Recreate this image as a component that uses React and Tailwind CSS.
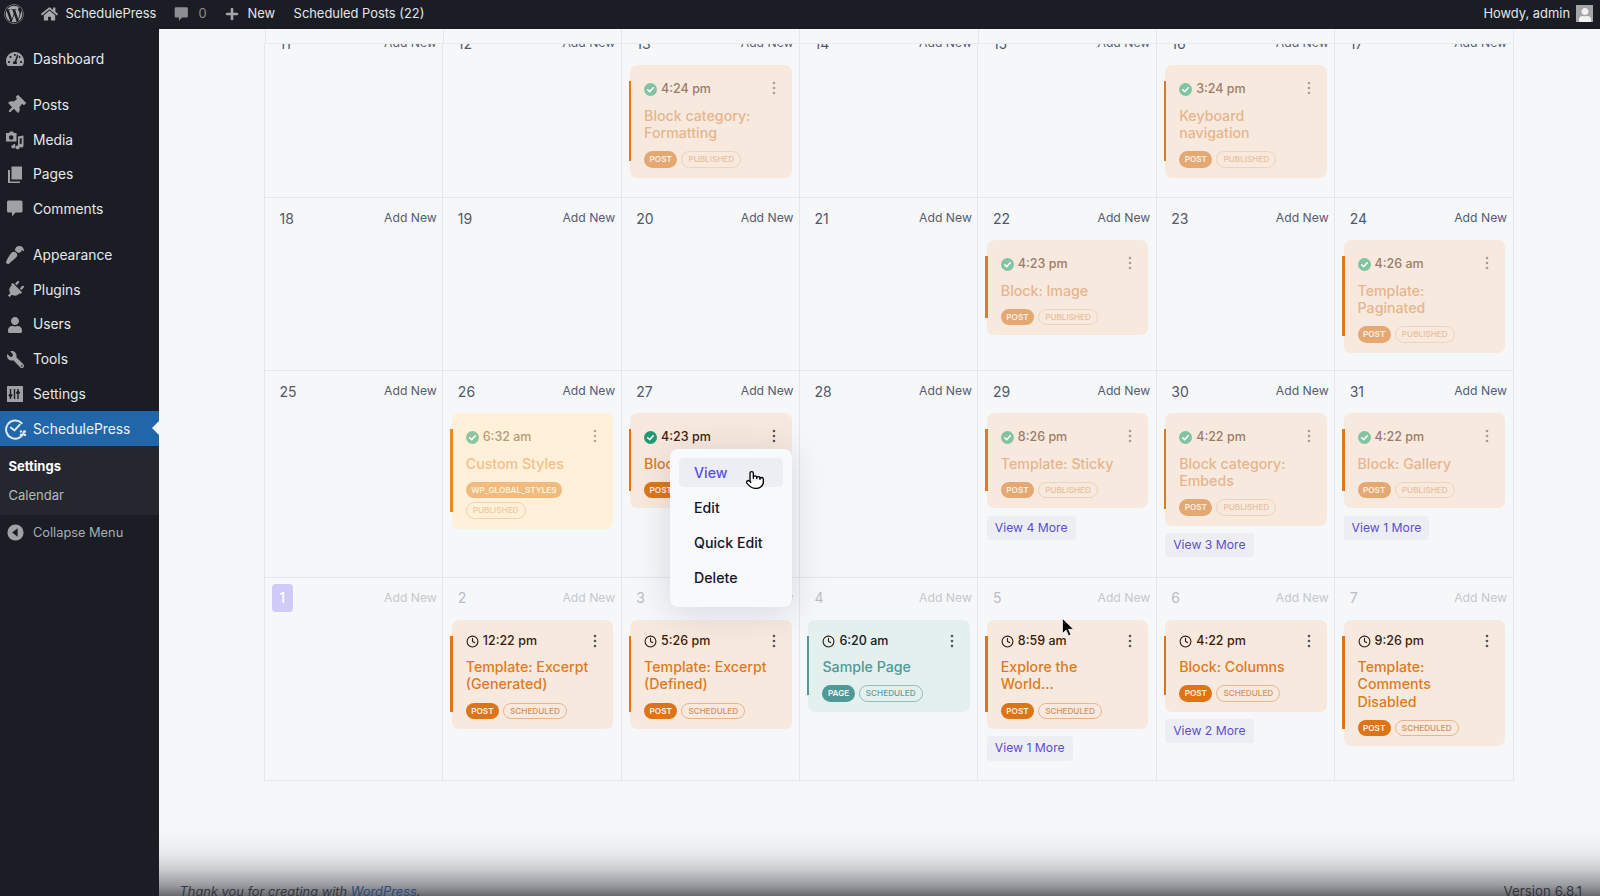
import React from 'react';
import { Clock, Pointer } from 'lucide-react';
import {
  FaWordpress, FaHome, FaPlus, FaUser, FaTachometerAlt, FaThumbtack,
  FaPaintBrush, FaPlug, FaWrench,
} from 'react-icons/fa';

const pub = (time, title, extra = {}) => ({ time, title, status: 'PUBLISHED', type: 'POST', ...extra });
const sch = (time, title, extra = {}) => ({ time, title, status: 'SCHEDULED', type: 'POST', ...extra });

const rows = [
  {
    height: 'h-[175px]',
    cells: [
      { d: 11 }, { d: 12 },
      { d: 13, card: pub('4:24 pm', 'Block category: Formatting') },
      { d: 14 }, { d: 15 },
      { d: 16, card: pub('3:24 pm', 'Keyboard navigation') },
      { d: 17 },
    ],
  },
  {
    height: 'h-[173px]',
    cells: [
      { d: 18 }, { d: 19 }, { d: 20 }, { d: 21 },
      { d: 22, card: pub('4:23 pm', 'Block: Image') },
      { d: 23 },
      { d: 24, card: pub('4:26 am', 'Template: Paginated') },
    ],
  },
  {
    height: 'h-[206.5px]',
    cells: [
      { d: 25 },
      { d: 26, card: pub('6:32 am', 'Custom Styles', { type: 'WP_GLOBAL_STYLES', tone: 'yellow' }) },
      { d: 27, card: pub('4:23 pm', 'Block: Cover', { active: true }), menu: true },
      { d: 28 },
      { d: 29, card: pub('8:26 pm', 'Template: Sticky'), more: 'View 4 More' },
      { d: 30, card: pub('4:22 pm', 'Block category: Embeds'), more: 'View 3 More' },
      { d: 31, card: pub('4:22 pm', 'Block: Gallery'), more: 'View 1 More' },
    ],
  },
  {
    height: 'h-[203.5px]',
    faded: true,
    cells: [
      { d: 1, today: true },
      { d: 2, card: sch('12:22 pm', 'Template: Excerpt (Generated)') },
      { d: 3, card: sch('5:26 pm', 'Template: Excerpt (Defined)') },
      { d: 4, card: sch('6:20 am', 'Sample Page', { type: 'PAGE', tone: 'teal' }) },
      { d: 5, card: sch('8:59 am', 'Explore the World...'), more: 'View 1 More' },
      { d: 6, card: sch('4:22 pm', 'Block: Columns'), more: 'View 2 More' },
      { d: 7, card: sch('9:26 pm', 'Template: Comments Disabled') },
    ],
  },
];

const tones = {
  published: {
    card: 'bg-[#f8e9de]', bar: 'bg-[#e07a1c]', time: 'text-[#9a7d69]', title: 'text-[#e6b58c]',
    type: 'bg-[#e6a873] text-[#fbeee2]', status: 'border-[#eed3bb] text-[#e8bf9b]', dots: '#a89c94', check: '#82c3a2',
  },
  active: {
    card: 'bg-[#f8e9de]', bar: 'bg-[#dd7418]', time: 'text-[#3b1d0c]', title: 'text-[#dd7b22]',
    type: 'bg-[#dd7418] text-[#fdf2e8]', status: 'border-[#e8b68c] text-[#d98f55]', dots: '#4f5362', check: '#1f9b74',
  },
  yellow: {
    card: 'bg-[#fff0d9]', bar: 'bg-[#e88a1f]', time: 'text-[#b89a78]', title: 'text-[#f3c08a]',
    type: 'bg-[#f0bb7c] text-[#fdf0dc]', status: 'border-[#f3d3ae] text-[#efc79b]', dots: '#b3a99a', check: '#8ec5a0',
  },
  scheduled: {
    card: 'bg-[#f8e9de]', bar: 'bg-[#dd7418]', time: 'text-[#3b1d0c]', title: 'text-[#dd7b22]',
    type: 'bg-[#dd7418] text-[#fdf2e8]', status: 'border-[#e8b68c] text-[#d98f55]', dots: '#4f5362',
  },
  teal: {
    card: 'bg-[#e3f0ee]', bar: 'bg-[#4f9a98]', time: 'text-[#10202a]', title: 'text-[#4f9a98]',
    type: 'bg-[#4f9a98] text-[#eef8f6]', status: 'border-[#8fbdb9] text-[#5d9e9b]', dots: '#4f5362',
  },
};

function CheckDot({ color }) {
  return (
    <svg viewBox="0 0 14 14" className="h-[13px] w-[13px] shrink-0">
      <circle cx="7" cy="7" r="7" fill={color} />
      <path d="M4 7.2l2.1 2.1L10 5.2" fill="none" stroke="#fff" strokeWidth="1.6" strokeLinecap="round" strokeLinejoin="round" />
    </svg>
  );
}

function Dots({ color, lift }) {
  return (
    <svg viewBox="0 0 6 16" className={`h-[16px] w-[6px] ${lift ? '-translate-y-[2px]' : ''}`}>
      <circle cx="3" cy="3" r="1.3" fill={color} />
      <circle cx="3" cy="8" r="1.3" fill={color} />
      <circle cx="3" cy="13" r="1.3" fill={color} />
    </svg>
  );
}

function Card({ card }) {
  const isPub = card.status === 'PUBLISHED';
  const key = card.tone || (card.active ? 'active' : isPub ? 'published' : 'scheduled');
  const t = tones[key];
  return (
    <div className={`relative ml-[8.4px] mr-[7.4px] rounded-[7px] pb-[10px] pl-[14px] pr-[15px] ${isPub ? 'pt-[15.5px]' : 'pt-[12.5px]'} ${t.card}`}>
      <span className={`absolute -left-[1.5px] top-[16px] bottom-[17px] w-[2.5px] ${t.bar}`} />
      <div className="flex h-[18px] items-center justify-between">
        <div className={`flex items-center gap-[4px] text-[12.5px] font-medium ${t.time}`}>
          {isPub ? <CheckDot color={t.check} /> : <Clock className="h-[13px] w-[13px] text-[#2b1a10]" strokeWidth={2} />}
          <span>{card.time}</span>
        </div>
        <Dots color={t.dots} lift={isPub} />
      </div>
      <div className={`mt-[8px] text-[14.2px] font-medium leading-[17.3px] ${t.title}`}>{card.title}</div>
      <div className="mt-[10px] flex flex-wrap gap-[4px]">
        <span className={`flex h-[16.5px] items-center rounded-full px-[5.5px] text-[8.2px] font-semibold ${t.type}`}>{card.type}</span>
        <span className={`flex h-[16.5px] items-center rounded-full border px-[6px] text-[8.2px] font-medium ${t.status}`}>{card.status}</span>
      </div>
    </div>
  );
}

function RowMenu() {
  return (
    <div className="absolute left-[48.3px] top-[78.4px] z-20 flex h-[157.7px] w-[121.7px] flex-col rounded-[8px] bg-[#f8f9fb] px-[8.5px] pt-[9px] text-[14.2px] font-medium text-[#14142b] shadow-[0_4px_36px_rgba(90,100,130,0.22)]">
      <div className="flex h-[28.5px] items-center rounded-[5px] bg-[#eceef3] px-[15.5px] text-[#5b4ee0]">View</div>
      <div className="mt-[6.5px] flex h-[28.5px] items-center px-[15.5px]">Edit</div>
      <div className="mt-[6.5px] flex h-[28.5px] items-center px-[15.5px]">Quick Edit</div>
      <div className="mt-[6.5px] flex h-[28.5px] items-center px-[15.5px]">Delete</div>
    </div>
  );
}

function Cell({ cell, faded }) {
  const num = faded ? 'text-[#b9bdc6]' : 'text-[#50586a]';
  const add = faded ? 'text-[#c4c8d0]' : 'text-[#555d6e]';
  return (
    <div className={`relative border-l border-[#e3e6ec] ${cell.menu ? 'z-10' : ''}`}>
      <div className="mb-[1.5px] flex h-[40.5px] items-center justify-between pr-[5.5px]">
        {cell.today ? (
          <span className="ml-[6.5px] flex h-[28px] w-[21.5px] items-center justify-center rounded-[4px] bg-[#cfcbf8] text-[14px] font-medium text-white">{cell.d}</span>
        ) : (
          <span className={`-translate-y-[0.5px] pl-[14.5px] text-[14px] ${num}`}>{cell.d}</span>
        )}
        <span className={`text-[12.2px] ${add}`}>Add New</span>
      </div>
      {cell.card && <Card card={cell.card} />}
      {cell.more && (
        <div className="ml-[8.4px] mt-[7.4px] inline-flex h-[24.3px] items-center rounded-[3px] bg-[#eceef4] px-[8px] text-[12.2px] text-[#5b4fcf]">{cell.more}</div>
      )}
      {cell.menu && <RowMenu />}
    </div>
  );
}

const MediaIcon = () => (
  <svg viewBox="0 0 20 20" className="h-[20px] w-[20px]" fill="currentColor">
    <path fillRule="evenodd" d="M1 3h3l1-1.5h3L9 3h2.5v8.5H1V3zm5.2 2.2a2.3 2.3 0 100 4.6 2.3 2.3 0 000-4.6z" />
    <path d="M13.5 6.5l5.5-1v10.2a2.2 1.9 0 11-1.8-1.9V8l-2 .4v9a2.2 1.9 0 11-1.7-1.9V6.5z" transform="translate(-0.5 0)" />
    <path d="M5.5 14h3.2v2.6a2 1.7 0 11-1.7-1.6V14z" transform="translate(1.5 0)" />
  </svg>
);
const PagesIcon = () => (
  <svg viewBox="0 0 20 20" className="h-[20px] w-[20px]" fill="currentColor">
    <path d="M6.5 1.5h10.5v13H6.5z" />
    <path d="M3 5h2v11.5h10V18H3z" />
  </svg>
);
const CommentIcon = ({ size = 'h-[20px] w-[20px]' }) => (
  <svg viewBox="0 0 20 20" className={size} fill="currentColor">
    <path d="M4 2h12.5a1.5 1.5 0 011.5 1.5v9a1.5 1.5 0 01-1.5 1.5H11l-3.5 4v-4H4a1.5 1.5 0 01-1.5-1.5v-9A1.5 1.5 0 014 2z" transform="translate(-0.5 -0.5)" />
  </svg>
);
const SettingsIcon = () => (
  <svg viewBox="0 0 20 20" className="h-[20px] w-[20px]">
    <rect x="2" y="2" width="16" height="16" rx="0.5" fill="currentColor" />
    <path d="M6 5v7M4.3 10.5L6 13l1.7-2.5M6 13v2M13.5 15V8M11.8 9.5l1.7-2.5 1.7 2.5M13.5 7V5M10 5v10" fill="none" stroke="#1a1d23" strokeWidth="1.4" transform="translate(-0.5 0)" />
  </svg>
);
const SpIcon = () => (
  <svg viewBox="0 0 24 24" className="h-[23px] w-[23px]" fill="none" stroke="currentColor" strokeWidth="2">
    <path d="M18.5 6.5A9.5 9.5 0 1021 15" strokeLinecap="round" />
    <path d="M7 11l4 3 5.5-6" strokeLinecap="round" strokeLinejoin="round" />
    <path d="M16.5 14h2.5v2.3h-2.5zM20.5 14H23v2.3h-2.5zM16.5 17.5h2.5v2.3h-2.5zM20.5 17.5H23v2.3h-2.5z" fill="currentColor" stroke="none" />
  </svg>
);
const CollapseIcon = () => (
  <svg viewBox="0 0 20 20" className="h-[17px] w-[17px]">
    <circle cx="10" cy="10" r="9.5" fill="currentColor" />
    <path d="M12.5 5v10L6 10z" fill="#1a1d23" />
  </svg>
);

const menuGroups = [
  ['Dashboard'],
  ['Posts', 'Media', 'Pages', 'Comments'],
  ['Appearance', 'Plugins', 'Users', 'Tools', 'Settings'],
];
const menuIcons = {
  Dashboard: <FaTachometerAlt className="h-[18px] w-[18px]" />,
  Posts: <FaThumbtack className="h-[19px] w-[19px] rotate-45" />,
  Media: <MediaIcon />,
  Pages: <PagesIcon />,
  Comments: <CommentIcon />,
  Appearance: <FaPaintBrush className="h-[18px] w-[18px] rotate-180" />,
  Plugins: <FaPlug className="h-[18px] w-[18px] rotate-45" />,
  Users: <FaUser className="h-[16px] w-[16px]" />,
  Tools: <FaWrench className="h-[17px] w-[17px] -scale-x-100" />,
  Settings: <SettingsIcon />,
};

function MenuItem({ label }) {
  return (
    <div className="flex h-[34.7px] items-center text-[13.8px] text-[#e6e8ea]">
      <span className="flex w-[33px] items-center justify-center pr-[3px] text-[#9ea2a7]">{menuIcons[label]}</span>
      {label}
    </div>
  );
}

function Sidebar() {
  return (
    <aside className="flex w-[158.5px] shrink-0 flex-col bg-[#1a1d23] pt-[13px]">
      <div className="flex flex-col gap-[11.3px]">
        {menuGroups.map((group, i) => (
          <div key={i} className="flex flex-col">
            {group.map((label) => <MenuItem key={label} label={label} />)}
            {i === 2 && (
              <div className="relative flex h-[35px] items-center bg-[#2166a8] text-[13.8px] text-[#eef2f6]">
                <span className="flex w-[33px] items-center justify-center pr-[2px] text-[#dfe8f1]"><SpIcon /></span>
                SchedulePress
                <span className="absolute right-0 top-[10px] h-0 w-0 border-y-[7.5px] border-r-[7.5px] border-y-transparent border-r-[#f6f7f9]" />
              </div>
            )}
          </div>
        ))}
      </div>
      <div className="flex h-[69px] flex-col bg-[#24282e] pl-[8.5px] pt-[6px] text-[13px]">
        <div className="flex h-[29px] items-center font-bold text-white">Settings</div>
        <div className="flex h-[29px] items-center text-[#b6babf]">Calendar</div>
      </div>
      <div className="flex h-[34px] items-center text-[12.8px] text-[#a8acb1]">
        <span className="flex w-[33px] items-center justify-center pr-[3px] text-[#9ea2a7]"><CollapseIcon /></span>
        Collapse Menu
      </div>
    </aside>
  );
}

function TopBar() {
  return (
    <header className="flex h-[29px] shrink-0 items-center justify-between bg-[#1a1d23] pb-[1px] pl-[4px] pr-[7px] text-[12.9px] text-[#e3e5e8]">
      <div className="flex items-center">
        <FaWordpress className="h-[20px] w-[20px] text-[#a4a7ac]" />
        <FaHome className="ml-[17px] h-[16px] w-[17px] text-[#a4a7ac]" />
        <span className="ml-[7.5px]">SchedulePress</span>
        <span className="ml-[17px] text-[#8b8e93]"><CommentIcon size="h-[17px] w-[17px]" /></span>
        <span className="ml-[8px] text-[#8b8e93]">0</span>
        <FaPlus className="ml-[18px] h-[14px] w-[14px] text-[#a4a7ac]" />
        <span className="ml-[9px]">New</span>
        <span className="ml-[18.5px]">Scheduled Posts (22)</span>
      </div>
      <div className="flex items-center gap-[6px]">
        <span>Howdy, admin</span>
        <span className="flex h-[17px] w-[17px] items-end justify-center overflow-hidden bg-[#a5a5a5]">
          <FaUser className="h-[14px] w-[14px] text-[#f1f1f1]" />
        </span>
      </div>
    </header>
  );
}

export default function App() {
  return (
    <div className="relative flex h-[896px] w-[1600px] flex-col overflow-hidden bg-[#f6f7f9] font-[Inter,sans-serif]">
      <TopBar />
      <div className="flex min-h-0 flex-1">
        <Sidebar />
        <main className="relative flex min-w-0 flex-1 flex-col">
          <div className="ml-[106px] grid h-[15px] w-[1249px] shrink-0 grid-cols-7 border-b border-r border-[#e9ebf0]">
            {Array.from({ length: 7 }).map((_, i) => (
              <div key={i} className="border-l border-[#e3e6ec]" />
            ))}
          </div>
          <div className="flex-1 overflow-hidden">
            <div className="-mt-[21px] ml-[105.5px] w-[1249.5px] border-r border-[#e3e6ec]">
              {rows.map((row, i) => (
                <div key={i} className={`grid grid-cols-7 border-b border-[#e3e6ec] ${row.height} ${i === 2 ? 'relative z-10' : ''}`}>
                  {row.cells.map((cell) => <Cell key={cell.d} cell={cell} faded={row.faded} />)}
                </div>
              ))}
            </div>
          </div>
          <div className="pointer-events-none absolute inset-x-0 bottom-0 h-[66px] bg-[linear-gradient(to_bottom,rgba(120,122,130,0)_0%,rgba(120,122,130,0.1)_35%,rgba(120,122,130,0.35)_60%,rgba(110,112,118,0.7)_85%,rgba(95,96,102,0.95)_100%)]" />
          <footer className="relative z-10 flex h-[10px] shrink-0 items-start justify-between pl-[21px] pr-[18px] leading-[17px] text-[#33363d]">
            <span className="-mt-[3px] text-[12.85px] italic">Thank you for creating with <span className="text-[#2a4a78]">WordPress</span>.</span>
            <span className="-mt-[3px] text-[13.3px]">Version 6.8.1</span>
          </footer>
        </main>
      </div>
      <Pointer className="absolute left-[745px] top-[470px] z-30 h-[20px] w-[20px] fill-white text-black" strokeWidth={1.6} />
      <svg viewBox="0 0 12 19" className="absolute left-[1062px] top-[618px] z-30 h-[19px] w-[12px]">
        <path d="M0.5 0.5v15l3.6-3.4 2.4 5.6 2.4-1-2.4-5.4h5z" fill="#000" stroke="#fff" strokeWidth="0.7" />
      </svg>
    </div>
  );
}
